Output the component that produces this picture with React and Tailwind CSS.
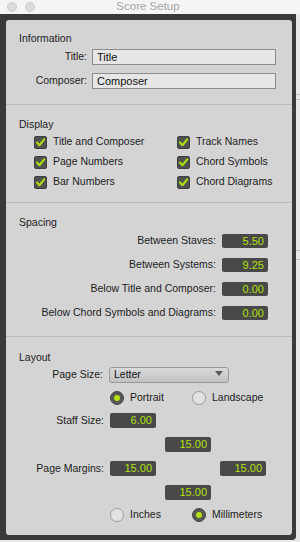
import React from "react";

const GREEN = "#b2e010";

function Check() {
  return (
    <div className="w-[13px] h-[13px] rounded-[2px] bg-[#515151] border border-[#3e3e3e] flex items-center justify-center shrink-0">
      <svg width="11" height="11" viewBox="0 0 11 11">
        <path d="M2 5.6 L4.4 8.2 L9.2 2.4" fill="none" stroke="#a8dc0a" strokeWidth="2.2" strokeLinecap="round" strokeLinejoin="round" />
      </svg>
    </div>
  );
}

function Radio({ on }) {
  return on ? (
    <div className="w-[14px] h-[14px] rounded-full bg-[#575757] border border-[#444] flex items-center justify-center shrink-0">
      <div className="w-[6px] h-[6px] rounded-full bg-[#b4e40c]" />
    </div>
  ) : (
    <div className="w-[14px] h-[14px] rounded-full bg-[#e2e2e2] border border-[#9c9c9c] shrink-0" />
  );
}

function NumBox({ v, h = "h-[15px]" }) {
  return (
    <div className={`w-[46px] ${h} rounded-[2px] bg-[#484848] flex items-center justify-end pr-[4px] text-[11px] leading-none text-[#b2e010] shrink-0`}>
      {v}
    </div>
  );
}

function Heading({ children }) {
  return <div className="h-[14px] leading-[14px] pl-[13px] text-[10.5px] text-[#1c1c1c]">{children}</div>;
}

function CheckItem({ label }) {
  return (
    <div className="flex items-center h-[20px] gap-[6px]">
      <Check />
      <span className="text-[10.5px] text-[#1c1c1c]">{label}</span>
    </div>
  );
}

function RadioItem({ on, label, w }) {
  return (
    <div className={`flex items-center gap-[6px] ${w}`}>
      <Radio on={on} />
      <span className="text-[10.5px] text-[#1c1c1c]">{label}</span>
    </div>
  );
}

export default function App() {
  return (
    <div className="w-[300px] h-[542px] flex flex-col bg-[#e8e8e8] overflow-hidden font-['Liberation_Sans',Arial,sans-serif] text-[#1c1c1c]">
      {/* title bar */}
      <div className="h-[14px] bg-[#f5f5f5] flex items-center relative shrink-0">
        <div className="flex gap-[8px] pl-[7px]">
          <div className="w-[10px] h-[10px] rounded-full bg-[#dcdcdc] border border-[#cdcdcd]" />
          <div className="w-[10px] h-[10px] rounded-full bg-[#dcdcdc] border border-[#cdcdcd]" />
        </div>
        <div className="absolute left-0 right-[4px] top-0 h-[14px] flex items-center justify-center text-[11.5px] text-[#a6a6a6]">
          Score Setup
        </div>
      </div>
      <div className="flex flex-1">
        {/* window */}
        <div className="w-[296px] h-[526px] bg-[#3a3a3a] pl-[6px] pr-[4px] pt-[6px] pb-[5px] rounded-br-[4px]">
          <div className="h-[515px] bg-[#d4d4d4] rounded-[3px] flex flex-col">
            {/* Information */}
            <div className="h-[85px] border-b border-[#b9b9b9] pt-[11px]">
              <Heading>Information</Heading>
              <div className="flex items-center mt-[4px] h-[16px]">
                <div className="w-[81px] text-right text-[10.5px]">Title:</div>
                <div className="ml-[5px] w-[184px] h-[16px] bg-[#e6e6e6] border border-[#8c8c8c] pl-[4px] flex items-center text-[11px] text-[#111]">Title</div>
              </div>
              <div className="flex items-center mt-[8px] h-[16px]">
                <div className="w-[81px] text-right text-[10.5px]">Composer:</div>
                <div className="ml-[5px] w-[184px] h-[16px] bg-[#e6e6e6] border border-[#8c8c8c] pl-[4px] flex items-center text-[11px] text-[#111]">Composer</div>
              </div>
            </div>
            {/* Display */}
            <div className="h-[98px] border-b border-[#b9b9b9] pt-[12px]">
              <Heading>Display</Heading>
              <div className="grid grid-cols-[143px_1fr] pl-[28px] mt-[1px]">
                <CheckItem label="Title and Composer" />
                <CheckItem label="Track Names" />
                <CheckItem label="Page Numbers" />
                <CheckItem label="Chord Symbols" />
                <CheckItem label="Bar Numbers" />
                <CheckItem label="Chord Diagrams" />
              </div>
            </div>
            {/* Spacing */}
            <div className="h-[134px] border-b border-[#b9b9b9] pt-[12px]">
              <Heading>Spacing</Heading>
              <div className="flex flex-col pr-[24px]">
                {[
                  ["Between Staves:", "5.50"],
                  ["Between Systems:", "9.25"],
                  ["Below Title and Composer:", "0.00"],
                  ["Below Chord Symbols and Diagrams:", "0.00"],
                ].map(([l, v]) => (
                  <div key={l} className="h-[24px] flex items-center justify-end">
                    <span className="text-[10.5px]">{l}</span>
                    <div className="ml-[6px]">
                      <NumBox v={v} h="h-[14px]" />
                    </div>
                  </div>
                ))}
              </div>
            </div>
            {/* Layout */}
            <div className="flex-1 pt-[13px]">
              <Heading>Layout</Heading>
              <div className="flex items-center mt-[3px] h-[16px]">
                <div className="w-[97px] text-right text-[10.5px]">Page Size:</div>
                <div className="ml-[6px] w-[120px] h-[16px] rounded-[3px] border border-[#9a9a9a] bg-gradient-to-b from-[#d9d9d9] to-[#c2c2c2] flex items-center justify-between pl-[4px] pr-[5px]">
                  <span className="text-[10.5px] text-[#111]">Letter</span>
                  <svg width="8" height="6" viewBox="0 0 8 6" className="-mt-[3px]">
                    <path d="M0 0 L8 0 L4 5 Z" fill="#5a5a5a" />
                  </svg>
                </div>
              </div>
              <div className="flex items-center mt-[7px] h-[16px] pl-[104px]">
                <RadioItem on label="Portrait" w="w-[82px]" />
                <RadioItem on={false} label="Landscape" />
              </div>
              <div className="flex items-center mt-[7px] h-[15px]">
                <div className="w-[98px] text-right text-[10.5px]">Staff Size:</div>
                <div className="ml-[6px]"><NumBox v="6.00" /></div>
              </div>
              <div className="flex mt-[9px] pl-[159px]">
                <NumBox v="15.00" />
              </div>
              <div className="flex items-center mt-[9px] h-[15px]">
                <div className="w-[98px] text-right text-[10.5px]">Page Margins:</div>
                <div className="ml-[6px]"><NumBox v="15.00" /></div>
                <div className="ml-[64px]"><NumBox v="15.00" /></div>
              </div>
              <div className="flex mt-[9px] pl-[159px]">
                <NumBox v="15.00" />
              </div>
              <div className="flex items-center mt-[7px] h-[16px] pl-[104px]">
                <RadioItem on={false} label="Inches" w="w-[82px]" />
                <RadioItem on label="Millimeters" />
              </div>
            </div>
          </div>
        </div>
        {/* background strip */}
        <div className="flex-1 flex flex-col bg-[#e9e9e9]">
          <div className="h-[80px]" />
          <div className="h-[1px] bg-[#bdbdbd]" />
          <div className="h-[4px]" />
          <div className="h-[1px] bg-[#c4c4c4]" />
          <div className="h-[150px]" />
          <div className="h-[1px] bg-[#bdbdbd]" />
          <div className="h-[8px]" />
          <div className="h-[1px] bg-[#c4c4c4]" />
        </div>
      </div>
    </div>
  );
}
